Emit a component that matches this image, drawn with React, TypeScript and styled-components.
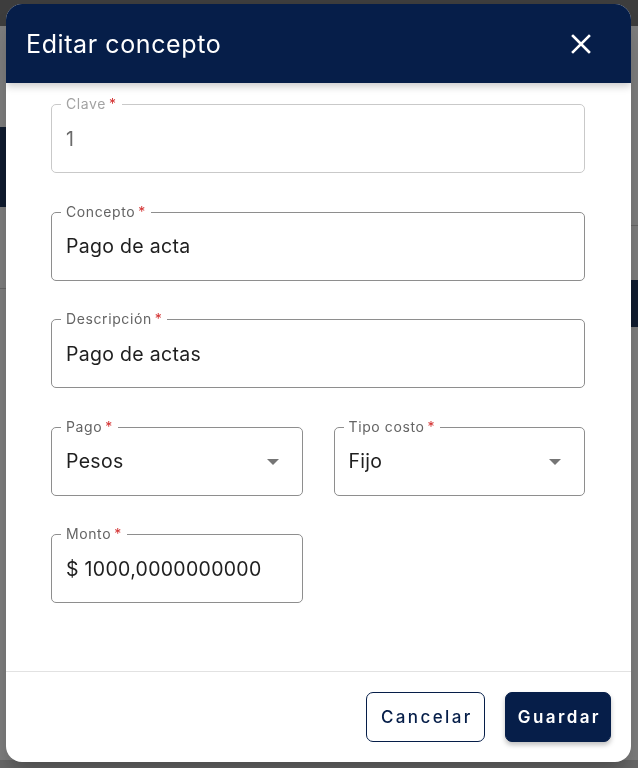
import React from "react";
import styled, { createGlobalStyle } from "styled-components";

const GlobalStyle = createGlobalStyle`
    html, body {
        margin: 0;
        padding: 0;
        width: 638px;
        height: 768px;
        overflow: hidden;
        font-family: Inter, "Liberation Sans", sans-serif;
    }
    * {
        box-sizing: border-box;
    }
`

const NAVY = "#061e49"

// page behind the dialog
const Page = styled.div`
    width: 638px;
    height: 768px;
    display: flex;
    flex-direction: column;
    background: #ffffff;
`

const PageTopBar = styled.div`
    height: 26px;
    background: #7b7b7b;
`

const PageMain = styled.div`
    flex: 1;
    display: flex;
    justify-content: space-between;
`

const PageColumn = styled.div<{ $blockTop: number; $blockHeight: number; $lineTop: number }>`
    width: 8px;
    display: flex;
    flex-direction: column;

    &::before {
        content: "";
        display: block;
        margin-top: ${p => p.$blockTop}px;
        height: ${p => p.$blockHeight}px;
        background: #203860;
    }
    &::after {
        content: "";
        display: block;
        margin-top: ${p => p.$lineTop}px;
        height: 1px;
        background: #d0d0d0;
    }
`

const PageFooter = styled.div`
    height: 8px;
    background: #d4d4d4;
`

const Backdrop = styled.div`
    position: fixed;
    inset: 0;
    background: rgba(0, 0, 0, 0.5);
    display: flex;
    align-items: flex-start;
    justify-content: flex-start;
    padding: 4px 0 0 6px;
`

const Dialog = styled.div`
    width: 625px;
    height: 758px;
    background: #ffffff;
    border-radius: 16px;
    overflow: hidden;
    display: flex;
    flex-direction: column;
    box-shadow: 0 11px 15px -7px rgba(0,0,0,0.2), 0 24px 38px 3px rgba(0,0,0,0.14);
`

const Header = styled.div`
    height: 79px;
    flex-shrink: 0;
    background: ${NAVY};
    display: flex;
    align-items: center;
    justify-content: space-between;
    padding: 0 39px 0 20px;
    box-shadow: 0 3px 8px rgba(0, 0, 0, 0.22);
    position: relative;
    z-index: 1;
`

const Title = styled.h2`
    margin: 0;
    color: #ffffff;
    font-size: 25px;
    font-weight: 400;
    letter-spacing: 0.6px;
`

const CloseButton = styled.button`
    border: none;
    background: none;
    padding: 0;
    width: 22px;
    height: 22px;
    display: flex;
    align-items: center;
    justify-content: center;
    cursor: pointer;
`

const Body = styled.div`
    flex: 1;
    padding: 21px 46px 0 45px;
    display: grid;
    grid-template-columns: 1fr 1fr;
    column-gap: 31px;
    row-gap: 38.6px;
    align-content: start;
`

const Field = styled.div<{ $full?: boolean; $disabled?: boolean }>`
    position: relative;
    grid-column: ${p => p.$full ? "1 / -1" : "auto"};
    height: 69px;
    border: 1px solid ${p => p.$disabled ? "#c9c9c9" : "#8e8e8e"};
    border-radius: 5px;
    display: flex;
    align-items: center;
    padding: 0 14px;
`

const Label = styled.label<{ $disabled?: boolean }>`
    position: absolute;
    top: -9px;
    left: 9px;
    padding: 0 5px;
    background: #ffffff;
    font-size: 14px;
    line-height: 16px;
    letter-spacing: 0.6px;
    color: ${p => p.$disabled ? "#a3a3a3" : "#646464"};
`

const Star = styled.span`
    color: #d32f2f;
    margin-left: 3px;
`

const Value = styled.span<{ $disabled?: boolean }>`
    flex: 1;
    font-size: 19.5px;
    color: ${p => p.$disabled ? "#6b6b6b" : "#1f1f1f"};
    letter-spacing: 0.3px;
`

const Arrow = styled.span`
    width: 0;
    height: 0;
    border-left: 6px solid transparent;
    border-right: 6px solid transparent;
    border-top: 6px solid #757575;
    margin-right: 9px;
    margin-top: 2px;
`

const Footer = styled.div`
    flex-shrink: 0;
    height: 91px;
    border-top: 1px solid #e2e2e2;
    display: flex;
    align-items: center;
    justify-content: flex-end;
    gap: 20px;
    padding: 0 20px 1px 0;
`

const Button = styled.button<{ $primary?: boolean }>`
    height: 50px;
    padding: 0 ${p => p.$primary ? "9px 0 12px" : "11px 0 14px"};
    border-radius: 7px;
    border: 1px solid ${NAVY};
    background: ${p => p.$primary ? NAVY : "#ffffff"};
    color: ${p => p.$primary ? "#ffffff" : NAVY};
    font-family: Inter, "Liberation Sans", sans-serif;
    font-size: 17px;
    font-weight: ${p => p.$primary ? 600 : 500};
    letter-spacing: 2.4px;
    box-shadow: ${p => p.$primary ? "0 3px 5px rgba(0,0,0,0.25)" : "none"};
    cursor: pointer;
`

interface FieldProps {
    label: string
    value: string
    full?: boolean
    disabled?: boolean
    select?: boolean
}

const TextField: React.FC<FieldProps> = ({ label, value, full, disabled, select }) => (
    <Field $full={full} $disabled={disabled}>
        <Label $disabled={disabled}>{label}<Star>*</Star></Label>
        <Value $disabled={disabled}>{value}</Value>
        {select && <Arrow />}
    </Field>
)

export default function App() {
    return (
        <>
            <GlobalStyle />
            <Page>
                <PageTopBar />
                <PageMain>
                    <PageColumn $blockTop={101} $blockHeight={80} $lineTop={81} />
                    <PageColumn $blockTop={254} $blockHeight={47} $lineTop={-102} />
                </PageMain>
                <PageFooter />
            </Page>
            <Backdrop>
                <Dialog role="dialog">
                    <Header>
                        <Title>Editar concepto</Title>
                        <CloseButton aria-label="Cerrar">
                            <svg width="20" height="20" viewBox="0 0 20 20">
                                <path d="M2 2 L18 18 M18 2 L2 18" stroke="#ffffff" strokeWidth="2.6" strokeLinecap="square" />
                            </svg>
                        </CloseButton>
                    </Header>
                    <Body>
                        <TextField label="Clave" value="1" full disabled />
                        <TextField label="Concepto" value="Pago de acta" full />
                        <TextField label="Descripción" value="Pago de actas" full />
                        <TextField label="Pago" value="Pesos" select />
                        <TextField label="Tipo costo" value="Fijo" select />
                        <TextField label="Monto" value="$ 1000,0000000000" />
                    </Body>
                    <Footer>
                        <Button>Cancelar</Button>
                        <Button $primary>Guardar</Button>
                    </Footer>
                </Dialog>
            </Backdrop>
        </>
    )
}
